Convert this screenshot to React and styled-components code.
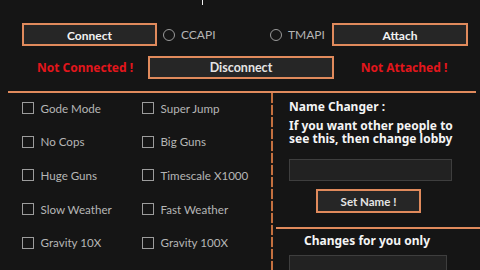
import React from "react";
import styled, { createGlobalStyle } from "styled-components";

const GlobalStyle = createGlobalStyle`
  html, body { margin: 0; padding: 0; background: #151515; }
  body { width: 480px; height: 270px; overflow: hidden; }
  * { box-sizing: border-box; }
`;

const ORANGE = "#e08a5c";
const FONT = `"Noto Sans", "Open Sans", sans-serif`;
const UI = `Lato, "Noto Sans", sans-serif`;

const Window = styled.div`
  position: relative;
  width: 480px;
  height: 270px;
  overflow: hidden;
  background: #151515;
  font-family: ${FONT};
`;

const Caret = styled.div`
  position: absolute;
  left: 202px;
  top: 0;
  width: 1px;
  height: 5px;
  background: #f0f0f0;
`;

const Header = styled.div`
  padding: 23px 12px 0 22px;
`;

const Row = styled.div`
  display: flex;
  align-items: center;
  height: ${(p) => p.$h}px;
  margin-top: ${(p) => p.$mt || 0}px;
`;

const Button = styled.button`
  width: ${(p) => p.$w}px;
  height: ${(p) => p.$h || 23}px;
  margin-left: ${(p) => p.$ml || 0}px;
  margin-top: ${(p) => p.$mt || 0}px;
  padding: 2px 0 0;
  background: #262626;
  border: 2px solid ${ORANGE};
  color: ${(p) => (p.$bold ? "#e4e4e4" : "#f2f2f2")};
  font-family: ${UI};
  font-size: ${(p) => p.$fs || 12}px;
  font-weight: 700;
  line-height: 1;
  display: flex;
  align-items: center;
  justify-content: center;
  flex: none;
`;

const Radio = styled.label`
  display: flex;
  align-items: center;
  gap: 6px;
  margin-left: ${(p) => p.$ml}px;
  width: ${(p) => p.$w}px;
  color: #b4b4b4;
  font-family: ${UI};
  font-size: 12px;
  flex: none;
`;

const RadioDot = styled.span`
  width: 12px;
  height: 12px;
  border-radius: 50%;
  border: 1.5px solid #9a9a9a;
  flex: none;
`;

const Status = styled.div`
  width: ${(p) => p.$w}px;
  padding-left: ${(p) => p.$pl || 0}px;
  color: #e3161c;
  font-size: 12px;
  font-weight: 700;
  text-align: center;
  flex: none;
`;

const Divider = styled.div`
  height: 2px;
  margin: ${(p) => p.$m};
  background: ${ORANGE};
`;

const Main = styled.div`
  display: grid;
  grid-template-columns: 263px 2px 1fr;
  margin-left: 8px;
  height: 178px;
`;

const OptionGrid = styled.div`
  display: grid;
  grid-template-columns: 120px 120px;
  grid-auto-rows: 14px;
  row-gap: 19.7px;
  padding: 8px 0 0 14px;
`;

const Option = styled.label`
  display: flex;
  align-items: center;
  gap: 6.5px;
  color: #b6b6b6;
  font-family: ${UI};
  font-size: 11.6px;
  white-space: nowrap;
`;

const Box = styled.span`
  width: 12px;
  height: 12px;
  border: 1.5px solid #9c9c9c;
  flex: none;
`;

const VLine = styled.div`
  width: 2px;
  background: repeating-linear-gradient(
    to bottom,
    #c4703f 0px,
    #c4703f 10px,
    #2a1a10 10px,
    #2a1a10 12px
  );
`;

const Panel = styled.div`
  display: flex;
  flex-direction: column;
`;

const Section = styled.div`
  display: flex;
  flex-direction: column;
  padding-left: 16px;
  padding-top: ${(p) => p.$pt || 0}px;
`;

const Heading = styled.div`
  color: #f4f4f4;
  font-size: 12px;
  font-weight: 700;
  line-height: ${(p) => p.$lh || 14}px;
  margin-left: ${(p) => p.$ml || 0}px;
  margin-top: ${(p) => p.$mt || 0}px;
`;

const Note = styled.div`
  margin-top: 5px;
  color: #f4f4f4;
  font-size: 12px;
  font-weight: 700;
  line-height: 13px;
`;

const TextBox = styled.div`
  width: ${(p) => p.$w}px;
  height: ${(p) => p.$h || 22}px;
  margin-top: ${(p) => p.$mt}px;
  background: #222222;
  border: 1px solid #3e3e3e;
  flex: none;
`;

const options = [
  ["Gode Mode", "Super Jump"],
  ["No Cops", "Big Guns"],
  ["Huge Guns", "Timescale X1000"],
  ["Slow Weather", "Fast Weather"],
  ["Gravity 10X", "Gravity 100X"],
  ["Gravity 1000X", "Sky Freeze"],
];

export default function App() {
  return (
    <Window>
      <GlobalStyle />
      <Caret />
      <Header>
        <Row $h={23}>
          <Button $w={135} $fs={12}>Connect</Button>
          <Radio $ml={6} $w={106}>
            <RadioDot />
            CCAPI
          </Radio>
          <Radio $ml={1} $w={62}>
            <RadioDot />
            TMAPI
          </Radio>
          <Button $w={136} $fs={12}>Attach</Button>
        </Row>
        <Row $h={23} $mt={10}>
          <Status $w={126}>Not Connected !</Status>
          <Button $w={186} $bold $fs={12.5}>
            Disconnect
          </Button>
          <Status $w={134} $pl={6}>
            Not Attached !
          </Status>
        </Row>
      </Header>
      <Divider $m="12px 4px 0 8px" />
      <Main>
        <OptionGrid>
          {options.flat().map((label) => (
            <Option key={label}>
              <Box />
              {label}
            </Option>
          ))}
        </OptionGrid>
        <VLine />
        <Panel>
          <Section $pt={7}>
            <Heading>Name Changer :</Heading>
            <Note>
              If you want other people to
              <br />
              see this, then change lobby
            </Note>
            <TextBox $w={163} $mt={14} />
            <Button $w={105} $h={24} $ml={27} $mt={8} $bold $fs={11.5}>
              Set Name !
            </Button>
          </Section>
          <Divider $m="14px 0 0 3px" />
          <Section>
            <Heading $lh={16} $ml={15} $mt={4}>
              Changes for you only
            </Heading>
            <TextBox $w={158} $h={30} $mt={6} />
          </Section>
        </Panel>
      </Main>
    </Window>
  );
}
